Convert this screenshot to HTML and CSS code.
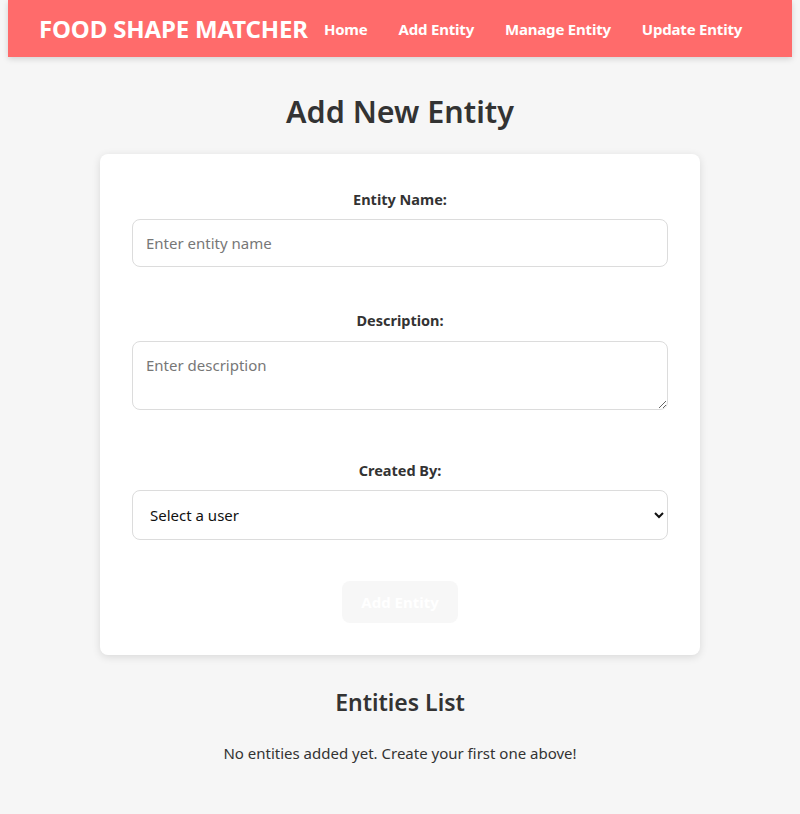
FILE: index.html
```html
<!DOCTYPE html>
<html lang="en">
<head>
<meta charset="utf-8">
<title>Food Shape Matcher</title>
<link rel="stylesheet" href="styles.css">
</head>
<body>
<nav class="navbar">
  <div class="brand">FOOD SHAPE MATCHER</div>
  <ul class="nav-links">
    <li><a href="#">Home</a></li>
    <li><a href="#">Add Entity</a></li>
    <li><a href="#">Manage Entity</a></li>
    <li><a href="#">Update Entity</a></li>
  </ul>
</nav>
<main class="page">
  <h1 class="title">Add New Entity</h1>
  <form class="card">
    <div class="group">
      <label class="label" for="name">Entity Name:</label>
      <input class="field" id="name" type="text" placeholder="Enter entity name">
    </div>
    <div class="group group-area">
      <label class="label" for="desc">Description:</label>
      <textarea class="field area" id="desc" placeholder="Enter description"></textarea>
    </div>
    <div class="group">
      <label class="label" for="user">Created By:</label>
      <select class="field select" id="user">
        <option>Select a user</option>
      </select>
    </div>
    <div class="actions">
      <button class="btn" type="button" disabled>Add Entity</button>
    </div>
  </form>
  <section class="list">
    <h2 class="list-title">Entities List</h2>
    <p class="empty">No entities added yet. Create your first one above!</p>
  </section>
</main>
</body>
</html>
```
FILE: styles.css
```css
* { box-sizing: border-box; }
html, body { margin: 0; padding: 0; }
body {
  background: #f6f6f6;
  font-family: "Noto Sans", "Open Sans", sans-serif;
  color: #333;
}
.navbar {
  margin: 0 8px;
  height: 57px;
  background: #ff6b6b;
  display: flex;
  align-items: center;
  padding: 0 0 0 31px;
  box-shadow: 0 2px 6px rgba(0,0,0,0.15);
}
.brand {
  color: #fff;
  font-weight: 700;
  font-size: 24px;
  letter-spacing: -0.15px;
  margin-right: 16px;
}
.nav-links {
  list-style: none;
  display: flex;
  margin: 0;
  padding: 0;
  gap: 31px;
}
.nav-links a {
  color: #fff;
  text-decoration: none;
  font-weight: 700;
  font-size: 15px;
  letter-spacing: -0.2px;
}
.page {
  display: flex;
  flex-direction: column;
  align-items: center;
}
.title {
  font-size: 30.5px;
  font-weight: 600;
  margin: 33px 0 22px;
  line-height: 42px;
}
.card {
  width: 600px;
  background: #fff;
  border-radius: 8px;
  box-shadow: 0 2px 8px rgba(0,0,0,0.12);
  padding: 35px 32px 32px;
}
.group {
  display: flex;
  flex-direction: column;
  align-items: center;
  margin-bottom: 43px;
}
.label {
  font-size: 14.5px;
  font-weight: 700;
  line-height: 20px;
  margin-bottom: 10px;
}
.field {
  width: 100%;
  border: 1px solid #dcdcdc;
  border-radius: 8px;
  background: #fff;
  font-family: inherit;
  font-size: 15px;
  color: #333;
  padding: 0 13px;
  height: 48px;
}
.field::placeholder { color: #777; }
.area {
  height: 69px;
  padding-top: 13px;
  margin-top: 1px;
  resize: vertical;
  display: block;
}
.group-area { margin-bottom: 50px; }
.select {
  height: 50px;
  padding: 0 13px;
  font-size: 15px;
  color: #111;
}
.actions {
  display: flex;
  justify-content: center;
  margin-top: -2px;
}
.btn {
  width: 116px;
  height: 42px;
  border: none;
  border-radius: 8px;
  background: #f7f7f7;
  color: #fff;
  font-family: inherit;
  font-weight: 700;
  font-size: 15px;
}
.list { text-align: center; }
.list-title {
  font-size: 23px;
  font-weight: 600;
  margin: 31px 0 25px;
}
.empty {
  font-size: 15px;
  margin: 0;
}
```
